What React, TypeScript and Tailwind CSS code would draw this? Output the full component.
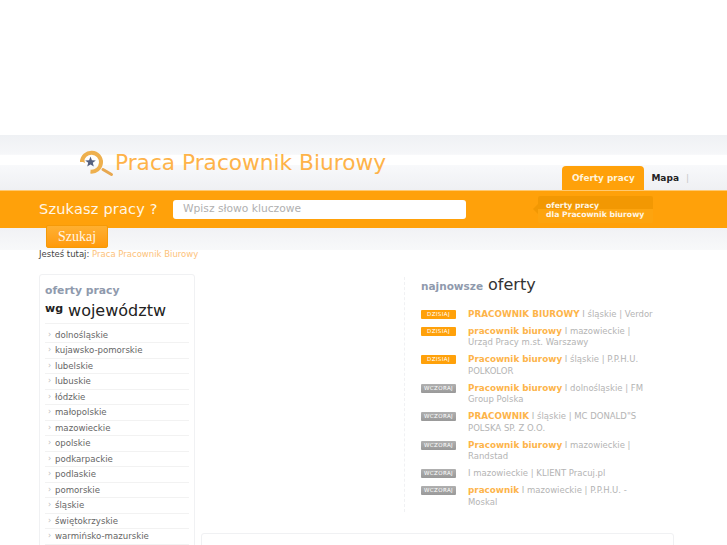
const regions = ["dolnośląskie","kujawsko-pomorskie","lubelskie","lubuskie","łódzkie","małopolskie","mazowieckie","opolskie","podkarpackie","podlaskie","pomorskie","śląskie","świętokrzyskie","warmińsko-mazurskie"];

const offers: { tag: string; title: string; rest: string }[] = [
  { tag: "DZISIAJ", title: "PRACOWNIK BIUROWY", rest: " I śląskie | Verdor" },
  { tag: "DZISIAJ", title: "pracownik biurowy", rest: " I mazowieckie | Urząd Pracy m.st. Warszawy" },
  { tag: "DZISIAJ", title: "Pracownik biurowy", rest: " I śląskie | P.P.H.U. POLKOLOR" },
  { tag: "WCZORAJ", title: "Pracownik biurowy", rest: " I dolnośląskie | FM Group Polska" },
  { tag: "WCZORAJ", title: "PRACOWNIK", rest: " I śląskie | MC DONALD\"S POLSKA SP. Z O.O." },
  { tag: "WCZORAJ", title: "Pracownik biurowy", rest: " I mazowieckie | Randstad" },
  { tag: "WCZORAJ", title: "", rest: "I mazowieckie | KLIENT Pracuj.pl" },
  { tag: "WCZORAJ", title: "pracownik", rest: " I mazowieckie | P.P.H.U. - Moskal" },
];

function Logo() {
  return (
    <svg width="36" height="30" viewBox="0 0 36 30" className="shrink-0">
      <path d="M3 14 A9.5 9.5 0 1 1 11.5 23.6" fill="none" stroke="#eeb04e" strokeWidth="4" />
      <path d="M1 12.5 l3.5 -3 l1.5 5.5 z" fill="#eeb04e" />
      <path d="M24 21.5 L32.5 26.5" stroke="#e8a850" strokeWidth="3" strokeLinecap="round" />
      <path d="M11.5 8.5 L12.9 12.2 L16.8 12.4 L13.8 14.8 L14.8 18.6 L11.5 16.4 L8.2 18.6 L9.2 14.8 L6.2 12.4 L10.1 12.2 Z" fill="#55607f" />
    </svg>
  );
}

export default function App() {
  return (
    <div className="h-[545px] w-[727px] overflow-hidden bg-white font-['DejaVu_Sans',sans-serif] text-[10px]">
      <div className="h-[135px]" />
      <header className="h-[55px] bg-[linear-gradient(to_bottom,#eff1f4_0%,#f6f7f9_35%,#ffffff_37%,#ffffff_54%,#f8f9fb_55%,#eff0f3_100%)]">
        <div className="flex h-full items-start justify-between pl-[79px] pr-[38px]">
          <div className="mt-[13px] flex items-center">
            <Logo />
            <span className="text-[21.7px] leading-[28px] text-[#feb349]">Praca Pracownik Biurowy</span>
          </div>
          <nav className="mt-[31px] flex items-center">
            <span className="flex h-[24px] w-[82px] items-center justify-center rounded-t-[4px] bg-[#ffa10a] pt-[1px] text-[8.9px] font-bold text-[#fff3da]">Oferty pracy</span>
            <span className="ml-[7px] mt-[1px] text-[9px] font-bold text-[#222222]">Mapa</span>
            <span className="ml-[7px] mt-[1px] text-[9px] text-[#c8c8c8]">|</span>
          </nav>
        </div>
      </header>

      <div className="flex h-[38px] items-center border-t border-[#ffc970] bg-[#ffa10a] pl-[39px]">
        <span className="w-[134px] text-[14.5px] tracking-[0.2px] text-[#fff6e6]">Szukasz pracy ?</span>
        <div className="flex h-[19px] w-[293px] items-center rounded-[3px] bg-white pl-[10px] text-[10.7px] text-[#b0b0b0]">Wpisz słowo kluczowe</div>
        <div className="relative ml-[72px] flex h-[27px] w-[115px] flex-col justify-center rounded-[2px] bg-[linear-gradient(to_bottom,#f29803_50%,#fda40f_50%)] pl-[8px] text-[7.7px] font-bold leading-[9px] text-[#fff6e6]">
          <div className="absolute left-[-5px] top-[8px] h-0 w-0 border-y-[5px] border-r-[5px] border-y-transparent border-r-[#f29803]" />
          <span>oferty pracy</span>
          <span className="whitespace-nowrap">dla Pracownik biurowy</span>
        </div>
      </div>

      <div className="flex h-[22px] items-start bg-gradient-to-b from-[#f1f2f5] to-[#f8f9fa] pl-[46px]">
        <button className="relative mt-[-3px] block h-[23px] w-[62px] rounded-[2px] border border-[#f59a08] bg-gradient-to-b from-[#ffb030] to-[#ff9a08] font-['Liberation_Serif',serif] text-[14px] leading-[20px] text-[#fff6e6]">Szukaj</button>
      </div>

      <div className="mt-[-2px] h-[13px] pl-[39px] pt-[1px] text-[8.5px] leading-[10px]">
        <span className="text-[#444444]">Jesteś tutaj: </span>
        <span className="text-[#fdc27a]">Praca Pracownik Biurowy</span>
      </div>

      <main className="mt-[13px] flex pl-[39px]">
        <aside className="h-[300px] w-[156px] shrink-0 rounded-[3px] border border-[#f0f1f3] px-[5px] pt-[9px]">
          <div className="text-[10.8px] font-bold leading-[14px] text-[#8f9aad]">oferty pracy</div>
          <div className="mt-[2px] flex h-[21px] items-center text-[#222222]">
            <span className="mb-[3px] text-[11px] font-bold">wg</span>
            <span className="ml-[5px] text-[16px] leading-[20px]">województw</span>
          </div>
          <ul className="mt-[2px] border-t border-[#f2f2f2] pt-[3.5px] text-[8.6px] text-[#666666]">
            {regions.map((r) => (
              <li key={r} className="flex h-[15.5px] items-center border-b border-[#f2f2f2] pl-[3px] leading-[14px]">
                <span className="w-[7px] text-[8px] text-[#bbbbbb]">›</span>
                <span className="whitespace-nowrap">{r}</span>
              </li>
            ))}
          </ul>
        </aside>

        <div className="ml-[6px] flex w-[473px] shrink-0 flex-col">
          <section className="ml-[203px] mt-[3px] h-[235px] w-[253px] border-l border-dashed border-[#f0f1f3] pl-[16px] pt-[1px]">
            <h2 className="flex items-baseline">
              <span className="text-[10.5px] font-bold text-[#8f9aad]">najnowsze</span>
              <span className="ml-[5px] text-[16px] font-normal leading-[14px] text-[#333333]">oferty</span>
            </h2>
            <ul className="mt-[14px]">
              {offers.map((o, i) => (
                <li key={i} className="mb-[5.5px] flex">
                  <span className={`mt-[1px] flex h-[9px] w-[35px] shrink-0 items-center justify-center rounded-[1px] text-[5.5px] leading-[9px] tracking-[0.4px] text-white ${o.tag === "DZISIAJ" ? "bg-[#ffa10a]" : "bg-gradient-to-b from-[#b0b0b0] to-[#999999]"}`}>{o.tag}</span>
                  <p className="ml-[12px] w-[188px] text-[8.5px] leading-[11.5px] text-[#b4b4b4]">
                    <span className="text-[8.8px] font-bold text-[#fdb44a]">{o.title}</span>
                    {o.rest}
                  </p>
                </li>
              ))}
            </ul>
          </section>
          <div className="mt-[21px] h-[40px] rounded-[3px] border border-[#f0f1f3]" />
        </div>
      </main>
    </div>
  );
}
